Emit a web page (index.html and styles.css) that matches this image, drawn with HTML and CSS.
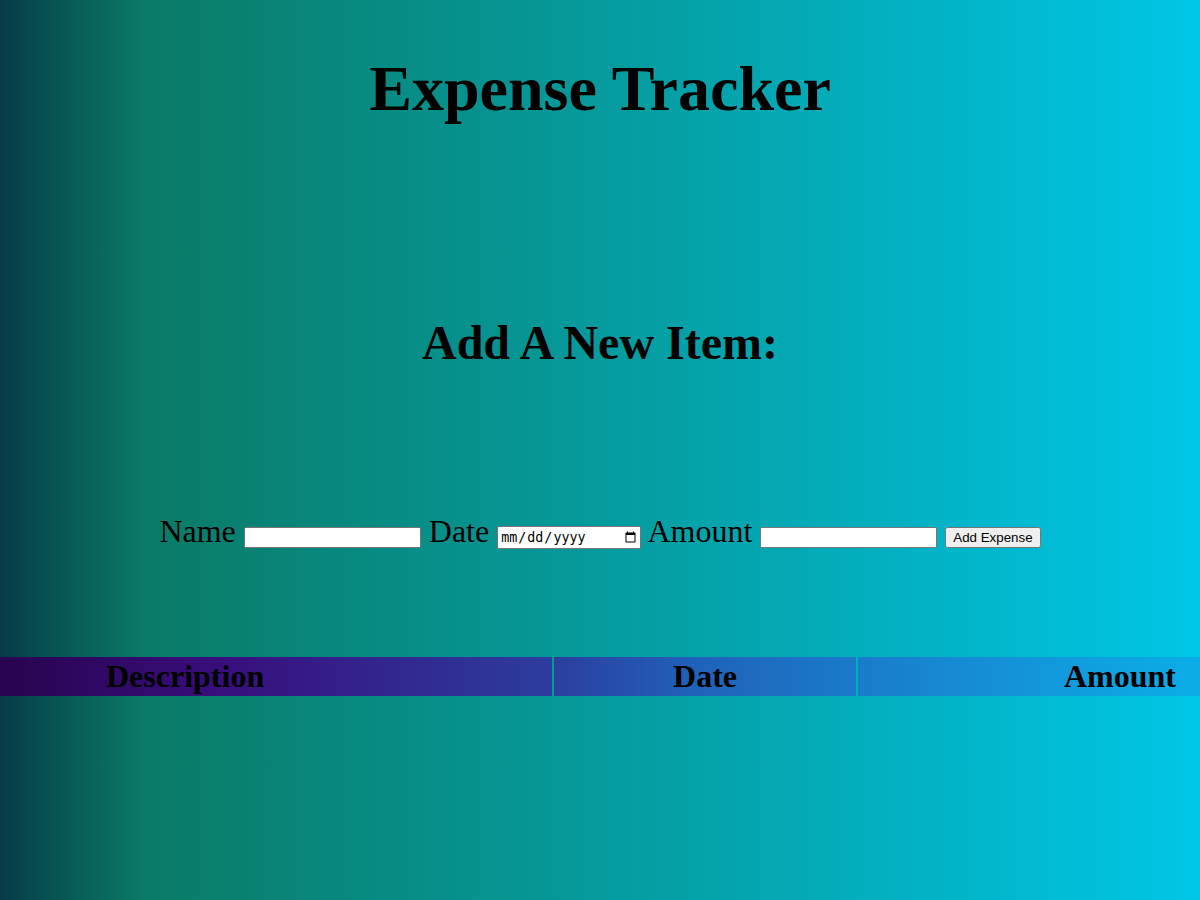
FILE: index.html
```html
<!DOCTYPE html>
<html lang="en">
<head>
<meta charset="utf-8">
<title>Expense Tracker</title>
<link rel="stylesheet" href="styles.css">
</head>
<body>
<h1 class="title">Expense Tracker</h1>
<h2 class="subtitle">Add A New Item:</h2>
<form class="entry-form">
<label for="name">Name</label> <input id="name" class="field" type="text"> <label for="date">Date</label> <input id="date" class="field field-date" type="date"> <label for="amount">Amount</label> <input id="amount" class="field" type="number"> <button class="add-btn" type="button">Add Expense</button>
</form>
<table class="expense-table">
<thead>
<tr>
<th class="col-desc">Description</th>
<th class="col-date">Date</th>
<th class="col-amount">Amount</th>
</tr>
</thead>
<tbody></tbody>
</table>
</body>
</html>
```
FILE: styles.css
```css
html {
  min-height: 100%;
}
body {
  margin: 0;
  min-height: 100vh;
  font-family: "Liberation Serif", "Times New Roman", serif;
  color: #000;
  background: linear-gradient(to right, #063c48 0%, #0a7a66 12%, #00c6e6 100%);
  text-align: center;
}
.title {
  font-size: 64px;
  font-weight: bold;
  margin: 52px 0 0;
}
.subtitle {
  font-size: 48px;
  font-weight: bold;
  margin: 189px 0 0;
}
.entry-form {
  font-size: 32px;
  margin: 143px 0 0;
}
.field {
  box-sizing: border-box;
  width: 177px;
  height: 21px;
}
.field-date {
  width: 144px;
  height: 23px;
}
.add-btn {
  height: 21px;
}
.expense-table {
  width: calc(100% + 4px);
  margin: 107px -2px 0;
  border-collapse: separate;
  border-spacing: 2px 0;
  table-layout: fixed;
}
.expense-table thead tr {
  background: linear-gradient(to right, #28034f 0%, #380e7c 18%, #2c3d9f 46%, #2062ba 58%, #1590d8 83%, #0aaee8 100%);
}
.expense-table th {
  font-size: 32px;
  font-weight: bold;
  padding: 1px;
}
.col-desc {
  box-sizing: border-box;
  width: 552px;
  text-align: left;
  padding-left: 106px !important;
}
.col-date {
  box-sizing: border-box;
  width: 302px;
  text-align: center;
}
.col-amount {
  text-align: right;
  padding-right: 24px !important;
}
```
